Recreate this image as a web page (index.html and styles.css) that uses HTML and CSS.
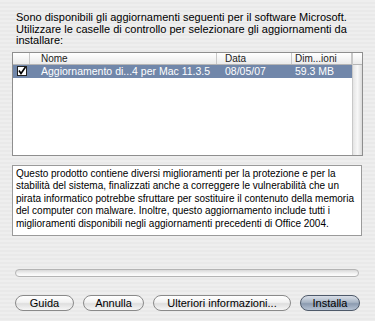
FILE: index.html
```html
<!DOCTYPE html>
<html lang="it">
<head>
  <meta charset="UTF-8">
  <title>Aggiornamenti Microsoft</title>
  <link rel="stylesheet" href="styles.css">
</head>
<body>
  <div class="dialog">
    <p class="intro">Sono disponibili gli aggiornamenti seguenti per il software Microsoft.<br>Utilizzare le caselle di controllo per selezionare gli aggiornamenti da<br>installare:</p>

    <div class="list">
      <div class="list-main">
        <div class="row head">
          <div class="cell c-check"></div>
          <div class="cell c-name">Nome</div>
          <div class="cell c-date">Data</div>
          <div class="cell c-size">Dim...ioni</div>
        </div>
        <div class="row selected">
          <div class="cell c-check">
            <svg width="10" height="10" viewBox="0 0 10 10">
              <rect x="0.5" y="0.5" width="9" height="9" fill="#fff" stroke="#222"/>
              <path d="M2 4.5 L4 7.5 L8.5 1" fill="none" stroke="#000" stroke-width="1.6"/>
            </svg>
          </div>
          <div class="cell c-name">Aggiornamento di...4 per Mac 11.3.5</div>
          <div class="cell c-date">08/05/07</div>
          <div class="cell c-size">59.3 MB</div>
        </div>
      </div>
      <div class="list-scroll">
        <div class="corner"></div>
        <div class="track"></div>
      </div>
    </div>

    <div class="desc">Questo prodotto contiene diversi miglioramenti per la protezione e per la<br>stabilità del sistema, finalizzati anche a correggere le vulnerabilità che un<br>pirata informatico potrebbe sfruttare per sostituire il contenuto della memoria<br>del computer con malware. Inoltre, questo aggiornamento include tutti i<br>miglioramenti disponibili negli aggiornamenti precedenti di Office 2004.</div>

    <div class="progress"></div>

    <div class="buttons">
      <button class="btn btn-help">Guida</button>
      <button class="btn btn-cancel">Annulla</button>
      <button class="btn btn-more">Ulteriori informazioni...</button>
      <button class="btn btn-default">Installa</button>
    </div>
  </div>
</body>
</html>
```

FILE: styles.css
```css
body {
  margin: 0;
  font-family: "Liberation Sans", Arial, sans-serif;
  font-size: 11px;
  color: #000;
  background-color: #ececec;
  background-image: repeating-linear-gradient(to bottom, #eeeeee 0, #eeeeee 2px, #e9e9e9 2px, #e9e9e9 4px);
  height: 321px;
  overflow: hidden;
}
.dialog {
  padding: 12px 12px 0 12px;
}
.intro {
  margin: 0 0 0 4px;
  line-height: 11.5px;
  white-space: nowrap;
}
.list {
  margin-top: 5px;
  width: 351px;
  height: 104px;
  box-sizing: border-box;
  border: 1px solid #8e8e8e;
  background: #fff;
  display: flex;
}
.list-main {
  flex: 1;
}
.row {
  display: flex;
  height: 13px;
  line-height: 13px;
  white-space: nowrap;
}
.head {
  height: 11px;
  line-height: 11px;
  font-size: 10px;
  color: #222;
  background: linear-gradient(to bottom, #ffffff, #ebebeb);
  border-bottom: 1px solid #b5b5b5;
}
.head .cell {
  border-right: 1px solid #c8c8c8;
}
.cell {
  box-sizing: border-box;
  overflow: hidden;
}
.c-check {
  width: 17px;
  display: flex;
  align-items: center;
  justify-content: center;
}
.c-name {
  width: 187px;
  padding-left: 11px;
}
.c-date {
  width: 75px;
  padding-left: 8px;
}
.c-size {
  width: 60px;
  padding-left: 3px;
}
.selected {
  background: #7187aa;
  color: #fff;
  font-size: 10.5px;
}
.selected .c-check svg {
  display: block;
}
.list-scroll {
  width: 10px;
  display: flex;
  flex-direction: column;
  border-left: 1px solid #c8c8c8;
}
.corner {
  height: 11px;
  background: linear-gradient(to bottom, #ffffff, #ebebeb);
  border-bottom: 1px solid #b5b5b5;
}
.track {
  flex: 1;
  background: linear-gradient(to right, #e4e4e4, #f7f7f7 50%, #dcdcdc);
}
.desc {
  margin-top: 9px;
  width: 350px;
  height: 71px;
  box-sizing: border-box;
  border: 1px solid #9a9a9a;
  background: #fff;
  padding: 2px 0 0 3px;
  font-size: 10px;
  line-height: 12.5px;
  white-space: nowrap;
  overflow: hidden;
}
.progress {
  margin: 33px 0 0 3px;
  width: 344px;
  height: 8px;
  box-sizing: border-box;
  border: 1px solid #b4b4b4;
  border-radius: 4px;
  background: linear-gradient(to bottom, #d8d8d8, #f4f4f4 60%, #fdfdfd);
}
.buttons {
  margin: 18px 0 0 3px;
  display: flex;
  width: 345px;
}
.btn {
  font-family: "Liberation Sans", Arial, sans-serif;
  font-size: 11px;
  height: 16px;
  padding: 0;
  border: 1px solid #8a8a8a;
  border-radius: 8px;
  background: linear-gradient(to bottom, #ffffff, #f1f1f1 45%, #dedede 55%, #f6f6f6);
  color: #000;
  line-height: 14px;
}
.btn-help {
  width: 59px;
}
.btn-cancel {
  width: 61px;
  margin-left: 9px;
}
.btn-more {
  width: 138px;
  margin-left: 9px;
}
.btn-default {
  width: 60px;
  margin-left: auto;
  border-color: #4f5a6a;
  background: linear-gradient(to bottom, #d9dfe8, #a9b5c5 45%, #8c9bb0 55%, #b5c2d3);
}
```
